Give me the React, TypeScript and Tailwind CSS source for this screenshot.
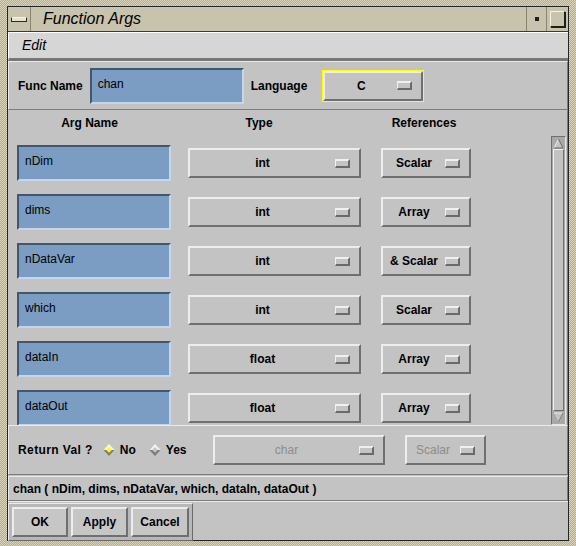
const raised =
  'border-2 border-t-[#ededed] border-l-[#ededed] border-b-[#6f6f6f] border-r-[#6f6f6f]';
const sunken =
  'border-2 border-t-[#45556a] border-l-[#45556a] border-b-[#c4d6ec] border-r-[#c4d6ec]';
const etched = 'border border-t-[#eaeaea] border-l-[#eaeaea] border-b-[#7c7c7c] border-r-[#7c7c7c]';

const args = [
  { name: 'nDim', type: 'int', ref: 'Scalar' },
  { name: 'dims', type: 'int', ref: 'Array' },
  { name: 'nDataVar', type: 'int', ref: '& Scalar' },
  { name: 'which', type: 'int', ref: 'Scalar' },
  { name: 'dataIn', type: 'float', ref: 'Array' },
  { name: 'dataOut', type: 'float', ref: 'Array' },
];

function Indicator() {
  return (
    <div className="w-[15px] h-[9px] shrink-0 border-t-2 border-l border-t-[#f0f0f0] border-l-[#f0f0f0] border-b-2 border-r-2 border-b-[#6a6a6a] border-r-[#6a6a6a] bg-[#c4c4c4]" />
  );
}

function OptionMenu({ label, width, disabled }: { label: string; width: string; disabled?: boolean }) {
  return (
    <div className={`${raised} ${width} h-[30px] flex items-center bg-[#c3c3c3]`}>
      <span
        className={`flex-1 text-center text-[12px] font-bold ${disabled ? 'text-[#8c8c8c] font-normal' : 'text-black'}`}
      >
        {label}
      </span>
      <div className="mr-[9px]">
        <Indicator />
      </div>
    </div>
  );
}

function TextField({ value, width }: { value: string; width: string }) {
  return (
    <div className={`${sunken} ${width} h-[36px] bg-[#7b9dc3] pl-[6px] pt-[5px] text-[12px] text-black shrink-0`}>
      {value}
    </div>
  );
}

function Diamond({ on }: { on?: boolean }) {
  return (
    <div
      className={`w-[8px] h-[8px] rotate-45 border-2 border-t-[#f2f2f2] border-l-[#f2f2f2] border-b-[#7a7a7a] border-r-[#7a7a7a] ${on ? 'bg-[#ffff00]' : 'bg-[#c3c3c3]'}`}
    />
  );
}

export default function App() {
  return (
    <div
      className="w-[576px] h-[546px] overflow-hidden pt-[6px] px-[7px] pb-[5px] bg-[#c7c1a9] bg-[repeating-conic-gradient(#b3ad95_0_25%,#d9d3bb_0_50%)] bg-[length:2px_2px]"
      style={{ fontFamily: '"Liberation Sans", Arial, sans-serif' }}
    >
      <div className="h-full flex flex-col border border-[#262626] bg-[#c3c3c3]">
        {/* Title bar */}
        <div className="h-[25px] flex bg-[#c8c3ac] border-b border-[#3a3a3a] shrink-0">
          <div className="w-[23px] flex items-center justify-center border-r border-[#8a8571]">
            <div className="w-[16px] h-[5px] bg-[#e6e2d0] border border-[#2a2a2a] border-t-[#f4f1e4]" />
          </div>
          <div className="flex-1 flex items-center pl-[12px] italic text-[16px] text-black">Function Args</div>
          <div className="w-[20px] flex items-center justify-center border-l border-[#8a8571]">
            <div className="w-[4px] h-[4px] bg-[#1e1e1e]" />
          </div>
          <div className="w-[22px] flex items-center justify-center border-l border-[#8a8571]">
            <div className="w-[15px] h-[16px] border border-[#1e1e1e] border-l-[#f4f1e4] border-t-[#f4f1e4] shadow-[1px_1px_0_#1e1e1e]" />
          </div>
        </div>

        {/* Menu bar */}
        <div className="h-[29px] shrink-0 bg-[#d6d6d6] border-t border-l border-white border-b-[3px] border-b-[#777777] flex items-center pl-[13px]">
          <span className="italic text-[14px] text-black">Edit</span>
        </div>

        {/* Func name panel */}
        <div className={`${etched} h-[49px] shrink-0 flex items-center`}>
          <span className="ml-[9px] text-[12px] font-bold">Func Name</span>
          <div className="ml-[7px]">
            <TextField value="chan" width="w-[154px]" />
          </div>
          <span className="ml-[7px] text-[12px] font-bold">Language</span>
          <div className="ml-[15px] border border-[#ffff00]">
            <OptionMenu label="C" width="w-[100px]" />
          </div>
        </div>

        {/* Args scroll area */}
        <div className="h-[315px] shrink-0 flex border-r border-[#7c7c7c]">
          <div className="flex-1 flex flex-col overflow-hidden">
            <div className="h-[35px] shrink-0 flex text-[12px] font-bold pt-[4px]">
              <span className="w-[163px] text-center">Arg Name</span>
              <span className="w-[176px] text-center">Type</span>
              <span className="w-[154px] text-center">References</span>
            </div>
            <div className="flex flex-col gap-[13px]">
              {args.map((a) => (
                <div key={a.name} className="h-[36px] flex items-center shrink-0">
                  <div className="ml-[9px]">
                    <TextField value={a.name} width="w-[154px]" />
                  </div>
                  <div className="ml-[17px]">
                    <OptionMenu label={a.type} width="w-[173px]" />
                  </div>
                  <div className="ml-[20px]">
                    <OptionMenu label={a.ref} width="w-[90px]" />
                  </div>
                </div>
              ))}
            </div>
          </div>
          {/* Scrollbar */}
          <div className="w-[15px] mt-[26px] mr-[1px] flex flex-col bg-[#a9a9a9] border border-[#707070] border-r-[#e6e6e6] border-b-[#e6e6e6]">
            <div className="h-[12px] flex items-center justify-center">
              <svg width="11" height="11" viewBox="0 0 11 11">
                <polygon points="5.5,1 10,10 1,10" fill="#c3c3c3" />
                <polyline points="1,10 5.5,1" stroke="#f0f0f0" fill="none" />
                <polyline points="5.5,1 10,10 1,10" stroke="#6a6a6a" fill="none" />
              </svg>
            </div>
            <div className="flex-1 mx-[1px] bg-[#c3c3c3] border border-t-[#f0f0f0] border-l-[#f0f0f0] border-b-[#6f6f6f] border-r-[#6f6f6f]" />
            <div className="h-[13px] flex items-center justify-center">
              <svg width="11" height="11" viewBox="0 0 11 11">
                <polygon points="1,1 10,1 5.5,10" fill="#c3c3c3" />
                <polyline points="1,1 10,1 5.5,10" stroke="#f0f0f0" fill="none" />
                <polyline points="10,1 5.5,10" stroke="#6a6a6a" fill="none" />
              </svg>
            </div>
          </div>
        </div>

        {/* Return val panel */}
        <div className={`${etched} h-[50px] shrink-0 flex items-center`}>
          <span className="ml-[9px] text-[12px] font-bold tracking-[0.4px]">Return Val ?</span>
          <div className="ml-[12px] flex items-center gap-[7px]">
            <Diamond on />
            <span className="text-[12px] font-bold">No</span>
          </div>
          <div className="ml-[15px] flex items-center gap-[7px]">
            <Diamond />
            <span className="text-[12px] font-bold">Yes</span>
          </div>
          <div className="ml-[26px]">
            <OptionMenu label="char" width="w-[172px]" disabled />
          </div>
          <div className="ml-[20px]">
            <OptionMenu label="Scalar" width="w-[81px]" disabled />
          </div>
        </div>

        {/* Signature */}
        <div className={`${etched} mt-[1px] h-[25px] shrink-0 flex items-center pl-[4px] text-[12px] font-bold`}>
          chan ( nDim, dims, nDataVar, which, dataIn, dataOut )
        </div>

        {/* Buttons */}
        <div className="flex-1 flex items-start pt-[1px] border-t border-[#eaeaea]">
          <div className="flex gap-[3px] p-[3px] bg-[#b8b8b8] border border-t-[#eaeaea] border-l-[#eaeaea] border-b-[#6a6a6a] border-r-[#6a6a6a]">
            {['OK', 'Apply', 'Cancel'].map((b, i) => (
              <div
                key={b}
                className={`${raised} ${i === 0 ? 'w-[56px]' : i === 1 ? 'w-[57px]' : 'w-[58px]'} h-[30px] bg-[#c6c6c6] flex items-center justify-center text-[12px] font-bold`}
              >
                {b}
              </div>
            ))}
          </div>
        </div>
      </div>
    </div>
  );
}
